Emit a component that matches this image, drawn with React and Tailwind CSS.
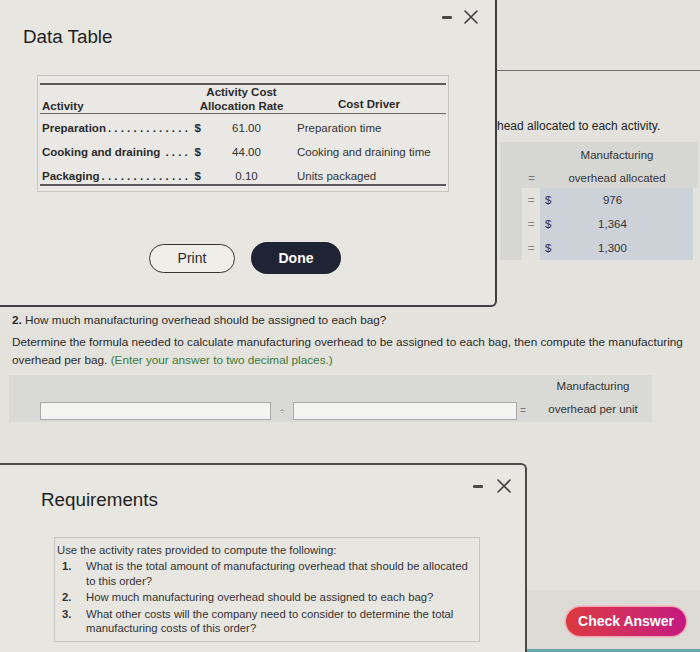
import React from "react";

function CloseX({ className = "" }) {
  return (
    <svg width="14" height="14" viewBox="0 0 14 14" className={className}>
      <path d="M1 1 L13 13 M13 1 L1 13" stroke="#3d3d3d" strokeWidth="1.6" fill="none" strokeLinecap="round" />
    </svg>
  );
}

function Minus() {
  return <div className="w-[10px] h-[3px] bg-[#4a4a4a] rounded-[1px]" />;
}

const rows = [
  { label: "Preparation", dots: ".............", rate: "61.00", driver: "Preparation time" },
  { label: "Cooking and draining ", dots: "....", rate: "44.00", driver: "Cooking and draining time" },
  { label: "Packaging", dots: "..............", rate: "0.10", driver: "Units packaged" },
];

function DataTableModal() {
  return (
    <div className="absolute left-0 top-0 w-[497px] h-[307px] bg-[#e8e6e1] border-r-2 border-b-2 border-[#3f3f3f] rounded-br-[6px] flex flex-col">
      <div className="flex justify-between items-start">
        <h1 className="ml-[23px] mt-[26px] text-[18.8px] leading-[22px] text-[#1f1f1f]">Data Table</h1>
        <div className="flex items-center gap-[12px] mt-[10px] mr-[17px]">
          <Minus />
          <CloseX />
        </div>
      </div>
      <div className="ml-[37px] mt-[27px] w-[412px] border border-[#c6c5c1] bg-[#eae8e4] px-[2px] pt-[7px] pb-[5px] text-[11.5px] text-[#333]">
        <div className="h-[2px] bg-[#5a5a5a]" />
        <div className="grid grid-cols-[161px_91px_154px] h-[28px] items-end font-bold text-[#2b2b2b] leading-[14px] whitespace-nowrap">
          <div className="pl-[2px]">Activity</div>
          <div className="text-center -ml-[10px]">
            Activity Cost
            <br />
            Allocation Rate
          </div>
          <div className="text-center pb-[2px]">Cost Driver</div>
        </div>
        <div className="h-px bg-[#6a6a6a]" />
        <div className="pt-[2px]">
          {rows.map((r, i) => (
            <div
              key={r.label}
              className={
                "grid grid-cols-[161px_91px_154px] leading-[14px] " +
                (i === 2 ? "h-[20px] items-start pt-[5px]" : "h-[24px] items-center")
              }
            >
              <div className="flex justify-between pl-[2px] whitespace-nowrap font-bold text-[#2b2b2b]">
                <span className="whitespace-pre">
                  {r.label}
                  <span className="tracking-[3.2px] pl-[2px]">{r.dots}</span>
                </span>
                <span>$</span>
              </div>
              <div className="text-center">{r.rate}</div>
              <div className="pl-[5px] whitespace-nowrap">{r.driver}</div>
            </div>
          ))}
        </div>
        <div className="h-[2px] bg-[#5a5a5a]" />
      </div>
      <div className="flex items-center gap-[16px] ml-[149px] mt-[50px]">
        <button className="w-[86px] h-[29px] rounded-full border-[1.5px] border-[#333] bg-[#eeede8] text-[14px] text-[#2a2a2a]">
          Print
        </button>
        <button className="w-[90px] h-[32px] rounded-full bg-[#1e2434] text-[14px] font-bold text-white">
          Done
        </button>
      </div>
    </div>
  );
}

function RequirementsModal() {
  const items = [
    ["1.", <>What is the total amount of manufacturing overhead that should be allocated<br />to this order?</>],
    ["2.", <>How much manufacturing overhead should be assigned to each bag?</>],
    ["3.", <>What other costs will the company need to consider to determine the total<br />manufacturing costs of this order?</>],
  ];
  return (
    <div className="absolute left-0 top-[463px] w-[527px] h-[200px] bg-[#e8e6e1] border-t-2 border-r-2 border-[#4a4a4a] rounded-tr-[6px] flex flex-col">
      <div className="flex justify-between items-start">
        <h2 className="ml-[41px] mt-[24px] text-[18.8px] leading-[22px] text-[#1f1f1f]">Requirements</h2>
        <div className="flex items-center gap-[14px] mt-[14px] mr-[14px]">
          <Minus />
          <CloseX />
        </div>
      </div>
      <div className="ml-[54px] mt-[26px] w-[426px] h-[105px] border border-[#c6c5c1] pl-[2px] pt-[5px] text-[11.3px] leading-[14.5px] text-[#333] whitespace-nowrap">
        <p>Use the activity rates provided to compute the following:</p>
        {items.map(([n, t], i) => (
          <div key={n} className={"grid grid-cols-[24px_1fr] pl-[5px] " + (i === 0 ? "mt-[1.5px]" : "mt-[2px]")}>
            <span className="font-bold">{n}</span>
            <span>{t}</span>
          </div>
        ))}
      </div>
    </div>
  );
}

export default function App() {
  return (
    <div className="relative w-[700px] h-[652px] overflow-hidden bg-[#e3e2dd] text-[#333] font-['Liberation_Sans',Arial,sans-serif] flex flex-col">
      <div className="h-[71px] shrink-0 border-b border-[#6e6e6e]" />
      <p className="mt-[48px] pl-[493px] text-[12px] leading-[14px] text-[#222] whitespace-nowrap">
        rhead allocated to each activity.
      </p>
      <div className="mt-[9px] ml-[500px] w-[198px] text-[11.5px] text-[#333]">
        <div className="grid grid-cols-[40px_1fr] h-[46px] bg-[#d6d6d3] leading-[23px] pt-[2px]">
          <div className="flex items-end justify-end pr-[5px] text-[#777]">
            <span>=</span>
          </div>
          <div className="text-center pr-[4px]">
            Manufacturing
            <br />
            overhead allocated
          </div>
        </div>
        {["976", "1,364", "1,300"].map((v) => (
          <div key={v} className="grid grid-cols-[22px_18px_153px] h-[24px] items-stretch leading-[24px]">
            <div className="bg-[#d6d6d3]" />
            <div className="text-center text-[#888]">=</div>
            <div className="bg-[#cdd2d9] flex">
              <span className="pl-[5px] w-[18px]">$</span>
              <span className="flex-1 text-center pr-[26px]">{v}</span>
            </div>
          </div>
        ))}
      </div>

      <p className="mt-[53px] pl-[12px] text-[11.75px] leading-[14px] text-[#2a2a2a] whitespace-nowrap">
        <span className="font-bold">2.</span> How much manufacturing overhead should be assigned to each bag?
      </p>
      <p className="mt-[6px] pl-[12px] text-[11.75px] leading-[18px] text-[#2a2a2a] whitespace-nowrap">
        Determine the formula needed to calculate manufacturing overhead to be assigned to each bag, then compute the manufacturing
        <br />
        overhead per bag. <span className="text-[#3d7a3a]">(Enter your answer to two decimal places.)</span>
      </p>
      <div className="mt-[6px] ml-[9px] w-[643px] h-[47px] bg-[#d9d9d6] flex items-end pb-[2px] text-[11.5px]">
        <div className="ml-[31px] w-[231px] h-[18px] border border-[#a9a9a9] bg-[#f3f3f1]" />
        <div className="w-[22px] text-center text-[9px] leading-[18px] text-[#888]">÷</div>
        <div className="w-[224px] h-[18px] border border-[#a9a9a9] bg-[#f3f3f1]" />
        <div className="w-[12px] text-center text-[10px] leading-[18px] text-[#777]">=</div>
        <div className="ml-[14px] w-[100px] self-stretch text-center leading-[23px] text-[#333] -mb-[2px] whitespace-nowrap">
          Manufacturing
          <br />
          overhead per unit
        </div>
      </div>

      <div className="mt-auto h-[62px] bg-[#dcdbd6] border-b-[3px] border-[#6aa6b2] flex justify-end pt-[17px] pr-[14px]">
        <button className="w-[120px] h-[29px] rounded-full bg-linear-to-r from-[#dc383e] to-[#c5177f] ring-[1.5px] ring-[#f2aab6] text-white font-bold text-[14px]">
          Check Answer
        </button>
      </div>

      <DataTableModal />
      <RequirementsModal />
    </div>
  );
}
